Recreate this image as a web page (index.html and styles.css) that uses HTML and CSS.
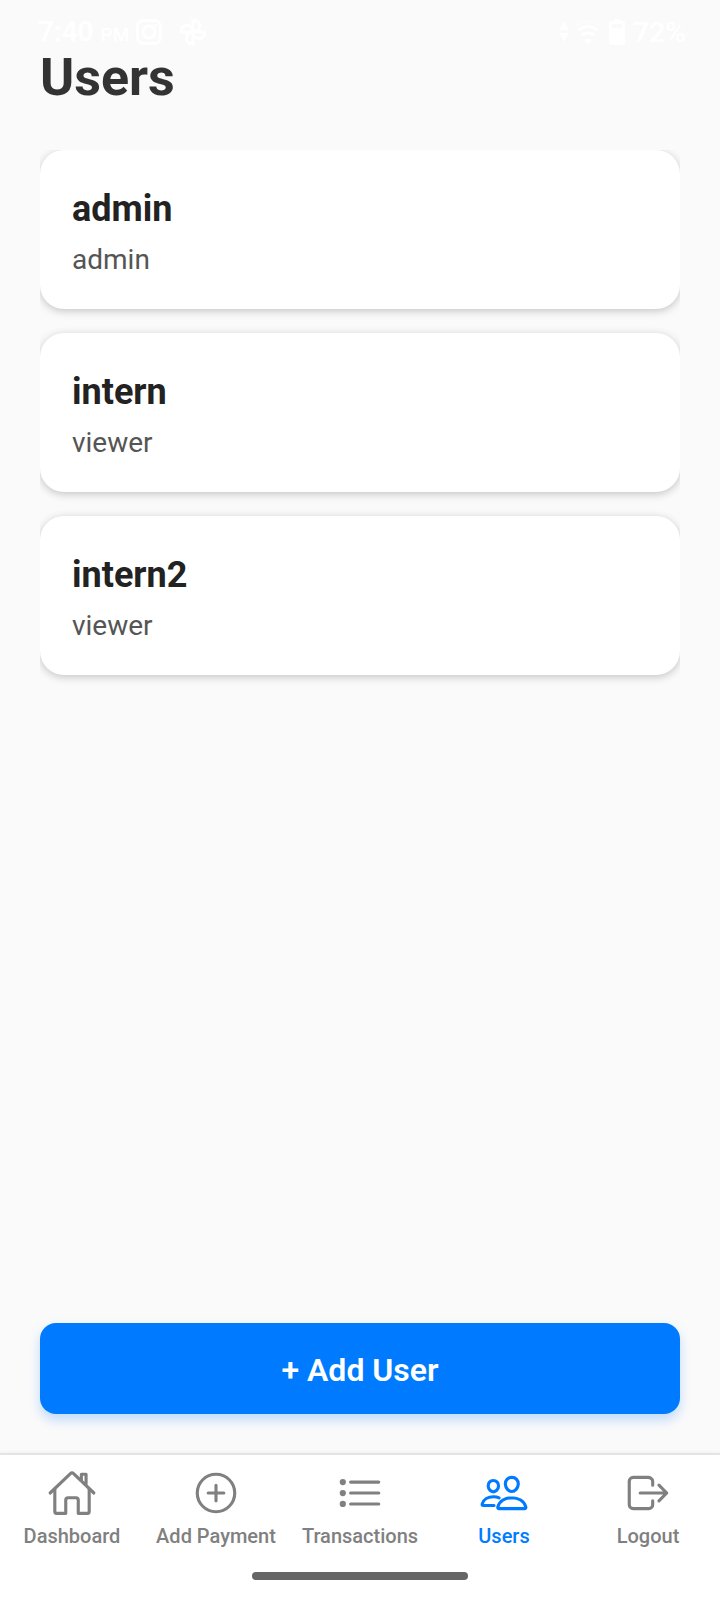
FILE: index.html
```html
<!DOCTYPE html>
<html lang="en">
<head>
<meta charset="utf-8">
<meta name="viewport" content="width=device-width, initial-scale=1">
<title>Users</title>
<link rel="stylesheet" href="styles.css">
</head>
<body>
<div class="app">
  <div class="status">
    <div class="status-left">
      <span class="status-text">7:40 <small class="status-period">PM</small></span>
      <svg class="status-instagram" viewBox="0 0 26 26" aria-hidden="true">
        <rect x="1.5" y="1.5" width="23" height="23" rx="6"/>
        <circle cx="13" cy="13" r="6"/>
        <circle class="solid" cx="19.5" cy="6.5" r="1.5"/>
      </svg>
      <svg class="status-photos" viewBox="0 0 28 28" aria-hidden="true">
        <path d="M14 14V2C18 2 20.500 4.500 20.500 8C20.500 11 18 14 14 14Z"/>
        <path d="M14 14H26C26 18 23.500 20.500 20 20.500C17 20.500 14 18 14 14Z"/>
        <path d="M14 14V26C10 26 7.500 23.500 7.500 20C7.500 17 10 14 14 14Z"/>
        <path d="M14 14H2C2 10 4.500 7.500 8 7.500C11 7.500 14 10 14 14Z"/>
      </svg>
    </div>
    <div class="status-right">
      <svg class="status-arrows" viewBox="0 0 10 22" aria-hidden="true"><path d="M5 0L10 9H0ZM5 21L10 12H0Z"/></svg>
      <svg class="status-wifi" viewBox="0 0 28 24" aria-hidden="true">
        <path class="faint" d="M2 5Q14 -2 26 5"/>
        <path d="M4 10Q14 3 24 10M8 15Q14 11 20 15"/>
        <path class="solid" d="M10 20Q14 17 18 20L14 24Z"/>
      </svg>
      <svg class="status-battery" viewBox="0 0 16 26" aria-hidden="true"><path fill-rule="evenodd" d="M5 0h6v2h3q2 0 2 2v20q0 2-2 2H2q-2 0-2-2V4q0-2 2-2h3zM3 5v4h10V5z"/></svg>
      <span class="status-text">72%</span>
    </div>
  </div>

  <main class="screen">
    <h1 class="title">Users</h1>
    <ul class="user-list">
      <li class="card"><h2 class="card-name">admin</h2><p class="card-role">admin</p></li>
      <li class="card"><h2 class="card-name">intern</h2><p class="card-role">viewer</p></li>
      <li class="card"><h2 class="card-name">intern2</h2><p class="card-role">viewer</p></li>
    </ul>
    <button class="add-button" type="button">+ Add User</button>
  </main>

  <nav class="tabs">
    <a class="tab" href="#dashboard">
      <svg class="tab-icon" viewBox="0 0 512 512" aria-hidden="true"><path d="M80 212v236a16 16 0 0016 16h96V328a24 24 0 0124-24h80a24 24 0 0124 24v136h96a16 16 0 0016-16V212"/><path d="M480 256L266.890 52c-5-5.280-16.690-5.340-21.780 0L32 256M400 179V64h-48v69"/></svg>
      Dashboard
    </a>
    <a class="tab" href="#add-payment">
      <svg class="tab-icon" viewBox="0 0 512 512" aria-hidden="true"><circle cx="256" cy="256" r="192"/><path d="M256 176v160M336 256H176"/></svg>
      Add Payment
    </a>
    <a class="tab" href="#transactions">
      <svg class="tab-icon" viewBox="0 0 512 512" aria-hidden="true"><path d="M160 144h288M160 256h288M160 368h288"/><circle class="dot" cx="80" cy="144" r="16"/><circle class="dot" cx="80" cy="256" r="16"/><circle class="dot" cx="80" cy="368" r="16"/></svg>
      Transactions
    </a>
    <a class="tab tab-active" href="#users" aria-current="page">
      <svg class="tab-icon" viewBox="0 0 512 512" aria-hidden="true"><path d="M402 168c-2.930 40.670-33.100 72-66 72s-63.120-31.320-66-72c-3-42.310 26.370-72 66-72s69 30.460 66 72z"/><path d="M336 304c-65.170 0-127.840 32.370-143.540 95.410-2.080 8.340 3.150 16.590 11.720 16.590h263.650c8.570 0 13.770-8.250 11.720-16.590C463.850 335.360 401.180 304 336 304z"/><path d="M200 185.940c-2.340 32.480-26.720 58.060-53 58.060s-50.700-25.570-53-58.060C91.610 152.150 115.340 128 147 128s55.390 24.770 53 57.940z"/><path d="M206 306c-18.050-8.270-37.930-11.450-59-11.450-52 0-102.100 25.850-114.650 76.200-1.650 6.660 2.530 13.250 9.370 13.250H154"/></svg>
      Users
    </a>
    <a class="tab" href="#logout">
      <svg class="tab-icon" viewBox="0 0 512 512" aria-hidden="true"><path d="M304 336v40a40 40 0 01-40 40H104a40 40 0 01-40-40V136a40 40 0 0140-40h152c22.090 0 48 17.910 48 40v40M368 336l80-80-80-80M176 256h256"/></svg>
      Logout
    </a>
  </nav>
  <div class="gesture-area"><div class="gesture-bar"></div></div>
</div>
</body>
</html>
```
FILE: styles.css
```css
* {
  box-sizing: border-box;
}

body {
  margin: 0;
  background: #fafafa;
  font-family: Roboto, "Noto Sans", sans-serif;
}

.app {
  min-height: 100vh;
  display: flex;
  flex-direction: column;
}

/* System status bar */
.status {
  display: flex;
  justify-content: space-between;
  padding: 16px 34px 0 38px;
  color: #fff;
  fill: #fff;
}

.status-left,
.status-right {
  display: flex;
  align-items: center;
  height: 32px;
}

.status-text {
  padding-top: 2px;
  font-size: 28px;
  line-height: 32px;
  font-weight: 600;
}

.status-period {
  font-size: 19px;
}

.status-instagram,
.status-photos {
  fill: none;
  stroke: #fff;
  stroke-width: 3;
  stroke-linejoin: round;
}

.status-instagram {
  width: 26px;
  height: 26px;
  margin-left: 7px;
}

.status-photos {
  width: 28px;
  height: 28px;
  margin-left: 17px;
}

.status-instagram .solid {
  fill: #fff;
  stroke: none;
}

.status-arrows {
  width: 10px;
  height: 22px;
}

.status-wifi {
  width: 28px;
  height: 24px;
  margin-left: 5px;
  fill: none;
  stroke: #fff;
  stroke-width: 3;
}

.status-wifi .faint {
  opacity: 0.3;
}

.status-wifi .solid {
  fill: #fff;
  stroke: none;
}

.status-battery {
  width: 16px;
  height: 26px;
  margin: 0 8px 0 7px;
}

/* Screen content */
.screen {
  flex: 1;
  display: flex;
  flex-direction: column;
  padding: 0 40px 39px;
}

.title {
  margin: 0 0 42px;
  color: #333;
  font-size: 52px;
  line-height: 60px;
  font-weight: 700;
}

.user-list {
  flex: 1;
  display: flex;
  flex-direction: column;
  gap: 24px;
  margin: 0;
  padding: 0;
  list-style: none;
  overflow: hidden;
}

.card {
  padding: 37px 32px 31px;
  border-radius: 24px;
  background: #fff;
  box-shadow: 0 2px 8px rgba(0, 0, 0, 0.22);
}

.card-name {
  margin: 0 0 10px;
  color: #222;
  font-size: 36px;
  line-height: 44px;
  font-weight: 700;
}

.card-role {
  margin: 0;
  color: #555;
  font-size: 28px;
  line-height: 37px;
}

.add-button {
  padding: 28px 32px 24px;
  border: 0;
  border-radius: 16px;
  background: #007bff;
  box-shadow: 0 6px 12px rgba(0, 123, 255, 0.24);
  color: #fff;
  font-family: inherit;
  font-size: 32px;
  line-height: 39px;
  font-weight: 600;
}

/* Bottom navigation */
.tabs {
  display: flex;
  border-top: 2px solid #e4e4e4;
  background: #fff;
  box-shadow: 0 0 4px rgba(0, 0, 0, 0.06);
}

.tab {
  flex: 1 1 0;
  display: flex;
  flex-direction: column;
  align-items: center;
  gap: 6px;
  padding-top: 13px;
  color: #808080;
  font-size: 20px;
  line-height: 24px;
  font-weight: 500;
  text-decoration: none;
  white-space: nowrap;
}

.tab-active {
  color: #007bff;
}

.tab-icon {
  width: 50px;
  height: 50px;
  fill: none;
  stroke: currentColor;
  stroke-width: 32;
  stroke-linecap: round;
  stroke-linejoin: round;
}

.tab-icon .dot {
  fill: currentColor;
}

.gesture-area {
  position: relative;
  padding: 24px 0 20px;
  background: #fff;
}

.gesture-bar {
  width: 30%;
  height: 8px;
  margin: 0 auto;
  border-radius: 4px;
  background: #666;
}
```
